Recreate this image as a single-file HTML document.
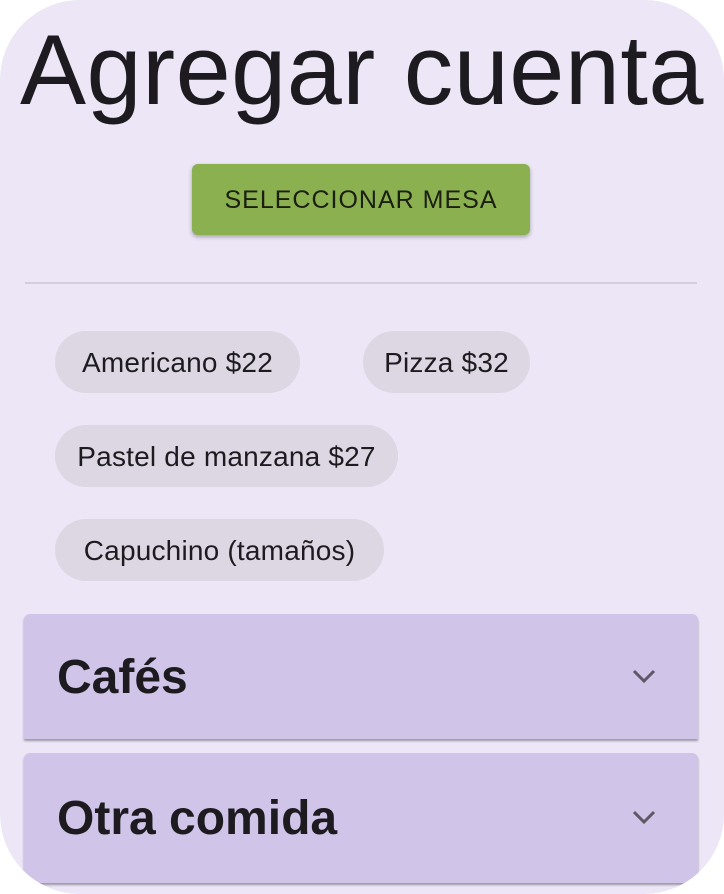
<!DOCTYPE html>
<html><head><meta charset="utf-8"><style>
html,body{margin:0;padding:0;background:#fff;width:724px;height:894px;overflow:hidden}
body{font-family:"Liberation Sans",sans-serif;color:#1d1b20}
.card{position:absolute;left:0;top:0;width:724px;height:894px;background:#ece6f6;border-radius:80px;overflow:hidden}
h1{position:absolute;left:0;top:14px;width:724px;margin:0;text-align:center;font-weight:normal;font-size:99px;line-height:112px;letter-spacing:0.5px;white-space:nowrap}
.btn{position:absolute;left:192px;top:164px;width:338px;height:71px;background:#8bb04f;border-radius:6px;box-shadow:0 2px 4px rgba(0,0,0,.3);font-size:25px;line-height:73px;text-align:center;color:#1a1f12;letter-spacing:1px}
.div{position:absolute;left:25px;top:282px;width:672px;height:2px;background:#d4cde0}
.chip{position:absolute;height:62px;border-radius:31px;background:#dcd7e3;font-size:28px;line-height:64px;text-align:center;color:#1d1b20;white-space:nowrap;letter-spacing:0.2px}
.acc{position:absolute;left:24px;width:674px;background:#d0c4e8;border-radius:6px 6px 0 0;box-shadow:0 2px 2px rgba(0,0,0,.35)}
.acc span{position:absolute;left:33px;font-size:48px;font-weight:bold}
.acc svg{position:absolute;left:608px}
</style></head><body>
<div class="card">
<h1>Agregar cuenta</h1>
<div class="btn">SELECCIONAR MESA</div>
<div class="div"></div>
<div class="chip" style="left:55px;top:331px;width:245px">Americano $22</div>
<div class="chip" style="left:363px;top:331px;width:167px">Pizza $32</div>
<div class="chip" style="left:55px;top:425px;width:343px">Pastel de manzana $27</div>
<div class="chip" style="left:55px;top:519px;width:329px">Capuchino (tamaños)</div>
<div class="acc" style="top:614px;height:125px"><span style="top:36px">Cafés</span>
<svg style="top:54px" width="24" height="16" viewBox="0 0 24 16"><path d="M2 3 L12 13 L22 3" fill="none" stroke="#5e5866" stroke-width="3"/></svg></div>
<div class="acc" style="top:753px;height:130px"><span style="top:38px">Otra comida</span>
<svg style="top:56px" width="24" height="16" viewBox="0 0 24 16"><path d="M2 3 L12 13 L22 3" fill="none" stroke="#5e5866" stroke-width="3"/></svg></div>
</div>
</body></html>
